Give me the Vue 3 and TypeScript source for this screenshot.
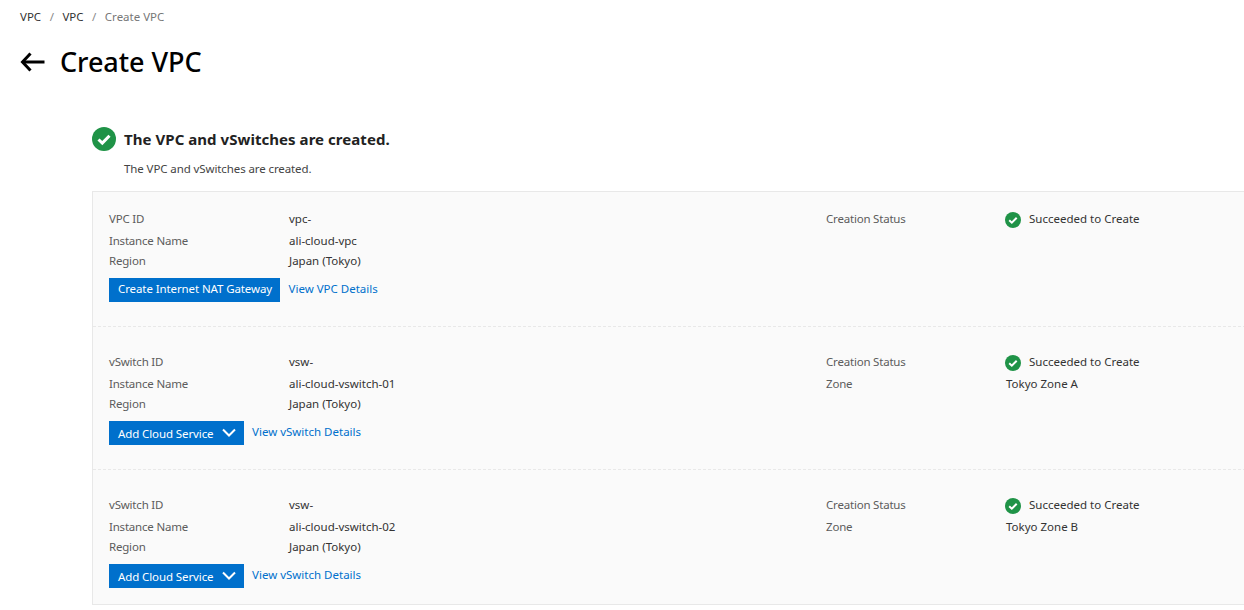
<script setup lang="ts">
interface Section {
  idLabel: string
  idValue: string
  name: string
  zone?: string
  button: string
  caret: boolean
  link: string
}

const sections: Section[] = [
  { idLabel: 'VPC ID', idValue: 'vpc-', name: 'ali-cloud-vpc', button: 'Create Internet NAT Gateway', caret: false, link: 'View VPC Details' },
  { idLabel: 'vSwitch ID', idValue: 'vsw-', name: 'ali-cloud-vswitch-01', zone: 'Tokyo Zone A', button: 'Add Cloud Service', caret: true, link: 'View vSwitch Details' },
  { idLabel: 'vSwitch ID', idValue: 'vsw-', name: 'ali-cloud-vswitch-02', zone: 'Tokyo Zone B', button: 'Add Cloud Service', caret: true, link: 'View vSwitch Details' },
]
</script>

<template>
  <div class="page">
    <nav class="crumbs">
      <span>VPC</span><i>/</i><span>VPC</span><i>/</i><span class="current">Create VPC</span>
    </nav>
    <header class="title">
      <svg class="back" width="25" height="20" viewBox="0 0 25 20" fill="none" stroke="#000" stroke-width="3">
        <path d="M2.5 10H24.5" />
        <path d="M10.5 1.5L2.5 10l8 8.500" />
      </svg>
      <h1>Create VPC</h1>
    </header>
    <main class="result">
      <div class="result-head">
        <svg class="ok" width="24" height="24" viewBox="0 0 24 24">
          <circle cx="12" cy="12" r="12" fill="#1f9347" />
          <path d="M6.5 12.500l3.800 3.600 7.200-7.400" fill="none" stroke="#fff" stroke-width="3" />
        </svg>
        <h2>The VPC and vSwitches are created.</h2>
      </div>
      <p class="sub">The VPC and vSwitches are created.</p>
      <div class="box">
        <section v-for="(s, i) in sections" :key="i" class="sec">
          <div class="grid">
            <div class="half">
              <div class="row first"><span class="lab">{{ s.idLabel }}</span><span class="val">{{ s.idValue }}</span></div>
              <div class="row"><span class="lab">Instance Name</span><span class="val">{{ s.name }}</span></div>
              <div class="row"><span class="lab">Region</span><span class="val">Japan (Tokyo)</span></div>
            </div>
            <div class="half">
              <div class="row first">
                <span class="lab">Creation Status</span>
                <span class="val status">
                  <svg class="tick" width="16" height="16" viewBox="0 0 16 16">
                    <circle cx="8" cy="8" r="8" fill="#1f9347" />
                    <path d="M4.200 8.300l2.600 2.400 4.900-5" fill="none" stroke="#fff" stroke-width="2" />
                  </svg>
                  Succeeded to Create
                </span>
              </div>
              <div v-if="s.zone" class="row"><span class="lab">Zone</span><span class="val">{{ s.zone }}</span></div>
            </div>
          </div>
          <div class="actions">
            <button type="button" class="btn" :class="{ plain: !s.caret }">
              {{ s.button }}
              <svg v-if="s.caret" class="caret" width="14" height="9" viewBox="0 0 14 9" fill="none" stroke="#fff" stroke-width="2">
                <path d="M1 1.500l6 6 6-6" />
              </svg>
            </button>
            <a class="link" href="#">{{ s.link }}</a>
          </div>
        </section>
      </div>
    </main>
  </div>
</template>

<style>
html, body { margin: 0; background: #fff; overflow: hidden; }
</style>

<style scoped>
.page {
  width: 1244px;
  height: 610px;
  overflow: hidden;
  font-family: "Noto Sans", "Open Sans", sans-serif;
  font-size: 11.5px;
  letter-spacing: -0.1px;
  color: #333;
}
.crumbs {
  height: 18px;
  padding: 8px 0 0 20px;
  line-height: 18px;
  color: #333;
  letter-spacing: 0;
  display: flex;
}
.crumbs i { font-style: normal; color: #888; margin: 0 8.500px; }
.crumbs .current { color: #777; }
.title {
  display: flex;
  align-items: center;
  height: 36px;
  margin-top: 18px;
  padding-left: 20px;
}
.back { margin-right: 15px; }
h1 {
  margin: 0;
  font-size: 27px;
  font-weight: 500;
  letter-spacing: -0.05px;
  line-height: 36px;
  color: #000;
}
.result { padding: 47px 0 0 92px; }
.result-head { display: flex; align-items: center; height: 24px; }
.ok { margin-right: 8px; }
h2 {
  margin: 0;
  font-size: 15px;
  font-weight: 700;
  letter-spacing: 0.05px;
  color: #222;
}
.sub { margin: 9px 0 0 32px; line-height: 18px; height: 31px; color: #444; }
.box {
  width: 1500px;
  background: #fafafa;
  border: 1px solid #e8e8e8;
  box-sizing: border-box;
}
.sec { padding: 24px 16px 24px; margin: 0; border-bottom: 1px dashed #e8e8e8; }
.sec:first-child { padding-top: 16px; }
.sec:last-child { border-bottom: 0; padding-bottom: 16px; }
.grid { display: flex; }
.half { width: 717px; flex: none; }
.row { display: flex; box-sizing: border-box; height: 20px; padding-bottom: 2px; align-items: center; }
.row.first { height: 22px; margin-bottom: 1px; }
.lab { width: 180px; flex: none; color: #5c5c5c; letter-spacing: -0.2px; }
.val { color: #333; letter-spacing: 0; }
.status { display: flex; align-items: center; gap: 8px; margin-left: -1px; }
.tick { margin-top: 4px; }
.actions { display: flex; align-items: center; margin-top: 7px; }
.btn {
  height: 24px;
  padding: 0 8px 0 9px;
  background: #0070cc;
  color: #fff;
  border: 0;
  font: inherit;
  letter-spacing: inherit;
  display: flex;
  align-items: center;
  gap: 8px;
}
.btn.plain { padding-bottom: 4px; }
.caret { margin-bottom: 2px; }
.link { margin: 0 0 4px 8.500px; color: #0070cc; letter-spacing: 0; text-decoration: none; }
</style>
